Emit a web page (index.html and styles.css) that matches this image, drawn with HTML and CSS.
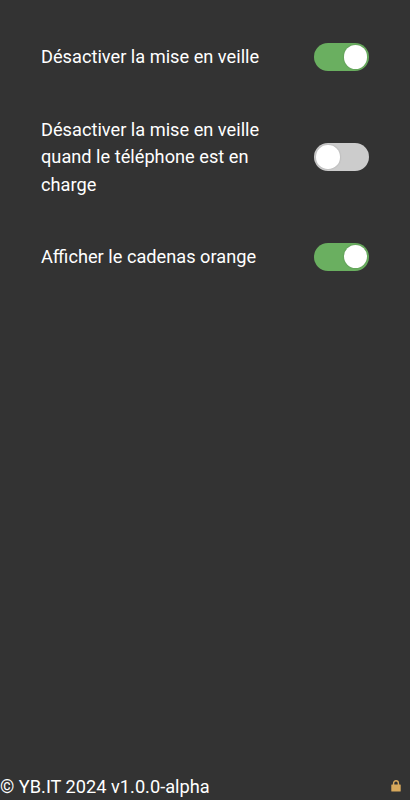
FILE: index.html
```html
<!DOCTYPE html>
<html lang="fr">
<head>
<meta charset="utf-8">
<title>Paramètres</title>
<link rel="stylesheet" href="styles.css">
</head>
<body>
<main class="settings">
  <label class="row"><span class="label">Désactiver la mise en veille</span><input class="switch" type="checkbox" checked></label>
  <label class="row"><span class="label">Désactiver la mise en veille quand le téléphone est en charge</span><input class="switch" type="checkbox"></label>
  <label class="row"><span class="label">Afficher le cadenas orange</span><input class="switch" type="checkbox" checked></label>
</main>
<footer class="footer">
  <span>© YB.IT 2024 v1.0.0-alpha</span>
  <svg class="lock" viewBox="0 0 10 12"><path d="M2.6 5V3.2a2.4 2.4 0 0 1 4.8 0V5" fill="none" stroke="#d8a95c" stroke-width="1.4"/><rect x="0.3" y="4.5" width="9.4" height="7" rx="0.6" fill="#d8a95c"/></svg>
</footer>
</body>
</html>
```
FILE: styles.css
```css
body {
  margin: 0;
  height: 800px;
  display: flex;
  flex-direction: column;
  background: #333;
  color: #fff;
  font: 18.22px/27.3px Roboto, sans-serif;
  overflow: hidden;
}
.settings {
  flex: 1;
  display: flex;
  flex-direction: column;
  gap: 45px;
  padding: 43px 41px 0;
}
.row {
  display: flex;
  align-items: center;
  justify-content: space-between;
}
.label {
  width: 232px;
}
.switch {
  appearance: none;
  display: flex;
  align-items: center;
  box-sizing: border-box;
  width: 55px;
  height: 28px;
  margin: 0;
  padding: 0 2px 0 2.4px;
  border-radius: 14px;
  background: #ccc;
}
.switch::before {
  content: "";
  width: 23.2px;
  height: 23.2px;
  border-radius: 50%;
  background: #fff;
  box-shadow: 0 0 2px rgba(0, 0, 0, 0.2);
}
.switch:checked {
  justify-content: flex-end;
  background: #6aaf60;
}
.footer {
  display: flex;
  align-items: center;
  justify-content: space-between;
  padding-right: 9px;
}
.lock {
  width: 10px;
  height: 12px;
}
```
